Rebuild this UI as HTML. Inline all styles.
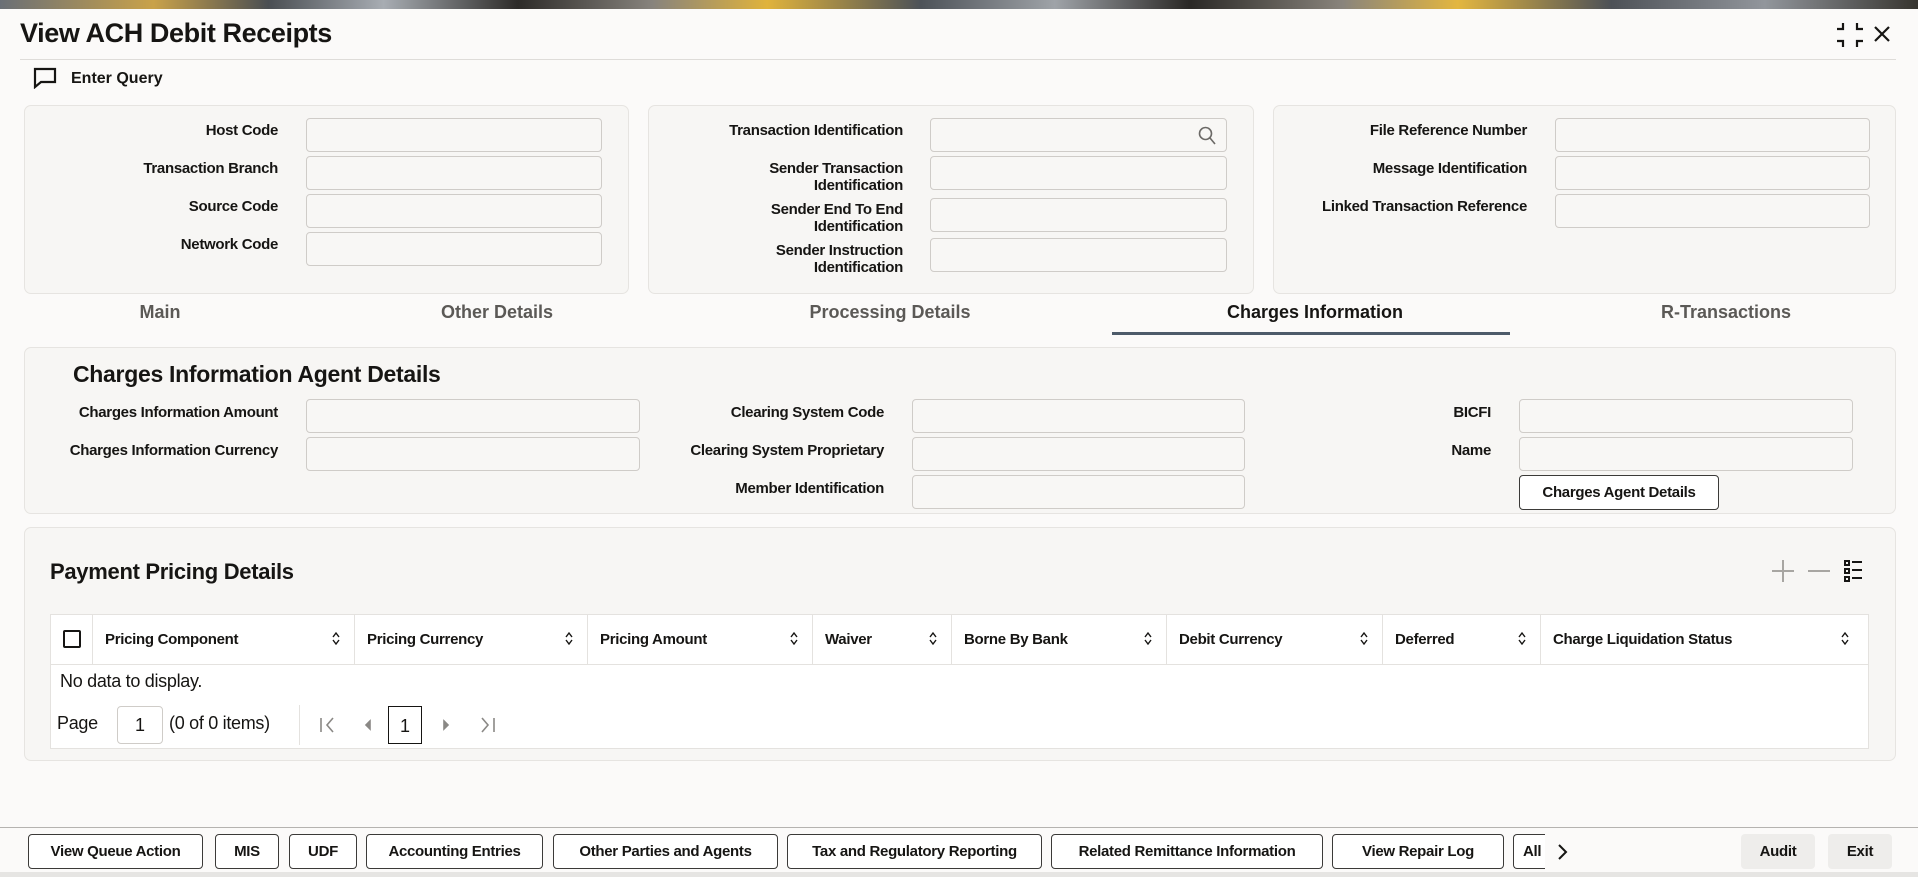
<!DOCTYPE html>
<html><head><meta charset="utf-8"><style>
*{box-sizing:border-box;margin:0;padding:0}
body{width:1918px;height:877px;position:relative;overflow:hidden;background:#fbfaf9;font-family:"Liberation Sans",Arial,sans-serif;color:#161513}
.a{position:absolute}
.banner{left:0;top:0;width:1918px;height:9px;background:linear-gradient(90deg,#6a6f76,#c9a24a 8%,#4a4e53 14%,#a8adb3 20%,#2d2b29 27%,#87837d 34%,#e0b33c 40%,#4d5258 48%,#9fa3a8 55%,#2a2826 62%,#89847c 70%,#e3b640 76%,#4d5157 84%,#92969c 92%,#36342f)}
.panel{background:#f7f6f4;border:1px solid #e6e4e1;border-radius:7px}
.lbl{font-size:15px;font-weight:bold;text-align:right;letter-spacing:-0.3px;line-height:17px}
.inp{background:#f8f7f5;border:1px solid #cfccc8;border-radius:4px;height:34px}
.tab{font-size:18px;font-weight:bold;color:#5b5956;transform:translateX(-50%);white-space:nowrap;top:302px}
.btn{top:834px;height:35px;border:1px solid #3b3a38;border-radius:4px;background:#fff;font-size:15px;font-weight:bold;display:flex;align-items:center;justify-content:center;letter-spacing:-0.3px;white-space:nowrap;overflow:hidden}
.th{top:614px;height:50px;font-size:15px;font-weight:bold;display:flex;align-items:center;padding-left:12px;letter-spacing:-0.3px;border-right:1px solid #e4e2df}
.sort{position:absolute;right:14px;top:17px;width:8px;height:14px}
</style></head><body>
<div class="a banner"></div>
<div class="a" style="left:20px;top:18px;font-size:27px;font-weight:bold;letter-spacing:-0.4px">View ACH Debit Receipts</div>
<svg class="a" style="left:1836px;top:22px" width="28" height="26" viewBox="0 0 28 26" fill="none" stroke="#161513" stroke-width="2.2"><path d="M7 1v6H1M21 1v6h6M7 25v-6H1M21 25v-6h6"/></svg>
<svg class="a" style="left:1873px;top:25px" width="18" height="18" viewBox="0 0 18 18" stroke="#161513" stroke-width="2.2"><path d="M2 2l14 14M16 2L2 16"/></svg>
<div class="a" style="left:20px;top:59px;width:1876px;height:1px;background:#dedcd9"></div>
<svg class="a" style="left:33px;top:67px" width="24" height="22" viewBox="0 0 24 22" fill="none" stroke="#161513" stroke-width="2.2"><path d="M2 2h20v13H8l-6 5z"/></svg>
<div class="a" style="left:71px;top:70px;font-size:16px;font-weight:bold">Enter Query</div>

<div class="a panel" style="left:24px;top:105px;width:605px;height:189px"></div>
<div class="a panel" style="left:648px;top:105px;width:606px;height:189px"></div>
<div class="a panel" style="left:1273px;top:105px;width:623px;height:189px"></div>

<div class="a lbl" style="left:60px;width:218px;top:122px">Host Code</div>
<div class="a lbl" style="left:60px;width:218px;top:160px">Transaction Branch</div>
<div class="a lbl" style="left:60px;width:218px;top:198px">Source Code</div>
<div class="a lbl" style="left:60px;width:218px;top:236px">Network Code</div>
<div class="a inp" style="left:306px;top:118px;width:296px"></div>
<div class="a inp" style="left:306px;top:156px;width:296px"></div>
<div class="a inp" style="left:306px;top:194px;width:296px"></div>
<div class="a inp" style="left:306px;top:232px;width:296px"></div>

<div class="a lbl" style="left:660px;width:243px;top:122px">Transaction Identification</div>
<div class="a lbl" style="left:660px;width:243px;top:160px">Sender Transaction<br>Identification</div>
<div class="a lbl" style="left:660px;width:243px;top:201px">Sender End To End<br>Identification</div>
<div class="a lbl" style="left:660px;width:243px;top:242px">Sender Instruction<br>Identification</div>
<div class="a inp" style="left:930px;top:118px;width:297px"></div>
<svg class="a" style="left:1198px;top:126px" width="18" height="19" viewBox="0 0 18 19" fill="none" stroke="#6b6966" stroke-width="1.6"><circle cx="7.5" cy="7.5" r="6"/><path d="M12 12l5 6"/></svg>
<div class="a inp" style="left:930px;top:156px;width:297px"></div>
<div class="a inp" style="left:930px;top:198px;width:297px"></div>
<div class="a inp" style="left:930px;top:238px;width:297px"></div>

<div class="a lbl" style="left:1280px;width:247px;top:122px">File Reference Number</div>
<div class="a lbl" style="left:1280px;width:247px;top:160px">Message Identification</div>
<div class="a lbl" style="left:1280px;width:247px;top:198px">Linked Transaction Reference</div>
<div class="a inp" style="left:1555px;top:118px;width:315px"></div>
<div class="a inp" style="left:1555px;top:156px;width:315px"></div>
<div class="a inp" style="left:1555px;top:194px;width:315px"></div>

<div class="a tab" style="left:160px">Main</div>
<div class="a tab" style="left:497px">Other Details</div>
<div class="a tab" style="left:890px">Processing Details</div>
<div class="a tab" style="left:1315px;color:#161513">Charges Information</div>
<div class="a tab" style="left:1726px">R-Transactions</div>
<div class="a" style="left:1112px;top:332px;width:398px;height:3px;background:#4d5b6a"></div>

<div class="a panel" style="left:24px;top:347px;width:1872px;height:167px"></div>
<div class="a" style="left:73px;top:361px;font-size:23px;font-weight:bold;letter-spacing:-0.3px">Charges Information Agent Details</div>
<div class="a lbl" style="left:40px;width:238px;top:404px">Charges Information Amount</div>
<div class="a lbl" style="left:40px;width:238px;top:442px">Charges Information Currency</div>
<div class="a inp" style="left:306px;top:399px;width:334px"></div>
<div class="a inp" style="left:306px;top:437px;width:334px"></div>
<div class="a lbl" style="left:640px;width:244px;top:404px">Clearing System Code</div>
<div class="a lbl" style="left:640px;width:244px;top:442px">Clearing System Proprietary</div>
<div class="a lbl" style="left:640px;width:244px;top:480px">Member Identification</div>
<div class="a inp" style="left:912px;top:399px;width:333px"></div>
<div class="a inp" style="left:912px;top:437px;width:333px"></div>
<div class="a inp" style="left:912px;top:475px;width:333px"></div>
<div class="a lbl" style="left:1300px;width:191px;top:404px">BICFI</div>
<div class="a lbl" style="left:1300px;width:191px;top:442px">Name</div>
<div class="a inp" style="left:1519px;top:399px;width:334px"></div>
<div class="a inp" style="left:1519px;top:437px;width:334px"></div>
<div class="a btn" style="left:1519px;top:475px;width:200px;height:35px">Charges Agent Details</div>

<div class="a panel" style="left:24px;top:527px;width:1872px;height:234px"></div>
<div class="a" style="left:50px;top:559px;font-size:22px;font-weight:bold;letter-spacing:-0.3px">Payment Pricing Details</div>
<svg class="a" style="left:1770px;top:558px" width="110" height="28" viewBox="0 0 110 28" fill="none"><path d="M13 2v22M2 13h22" stroke="#a8a6a2" stroke-width="2"/><path d="M38 13h22" stroke="#a8a6a2" stroke-width="2"/><g stroke="#161513" stroke-width="2"><rect x="75" y="3" width="4" height="4"/><rect x="75" y="11" width="4" height="4"/><rect x="75" y="19" width="4" height="4"/><path d="M82 4h10M82 12h10M82 20h10"/></g></svg>

<div class="a" style="left:50px;top:614px;width:1819px;height:135px;background:#fff;border:1px solid #e4e2df"></div>
<div class="a" style="left:50px;top:664px;width:1819px;height:1px;background:#e4e2df"></div>
<div class="a" style="left:50px;top:614px;width:43px;height:50px;border-right:1px solid #e4e2df"></div>
<div class="a" style="left:63px;top:630px;width:18px;height:18px;border:2px solid #161513;border-radius:2px"></div>
<svg width="0" height="0" style="position:absolute"><defs><path id="s" d="M1 6l3-4 3 4M1 9l3 4 3-4" stroke="#161513" stroke-width="1.4" fill="none"/></defs></svg>
<div class="a th" style="left:93px;width:262px">Pricing Component<svg class="sort" viewBox="0 0 8 14"><use href="#s"/></svg></div>
<div class="a th" style="left:355px;width:233px">Pricing Currency<svg class="sort" viewBox="0 0 8 14"><use href="#s"/></svg></div>
<div class="a th" style="left:588px;width:225px">Pricing Amount<svg class="sort" viewBox="0 0 8 14"><use href="#s"/></svg></div>
<div class="a th" style="left:813px;width:139px">Waiver<svg class="sort" viewBox="0 0 8 14"><use href="#s"/></svg></div>
<div class="a th" style="left:952px;width:215px">Borne By Bank<svg class="sort" viewBox="0 0 8 14"><use href="#s"/></svg></div>
<div class="a th" style="left:1167px;width:216px">Debit Currency<svg class="sort" viewBox="0 0 8 14"><use href="#s"/></svg></div>
<div class="a th" style="left:1383px;width:158px">Deferred<svg class="sort" viewBox="0 0 8 14"><use href="#s"/></svg></div>
<div class="a th" style="left:1541px;width:328px;border-right:none">Charge Liquidation Status<svg class="sort" style="right:20px" viewBox="0 0 8 14"><use href="#s"/></svg></div>
<div class="a" style="left:60px;top:671px;font-size:18px;letter-spacing:-0.3px">No data to display.</div>
<div class="a" style="left:57px;top:713px;font-size:18px;letter-spacing:-0.3px">Page</div>
<div class="a" style="left:117px;top:706px;width:46px;height:38px;border:1px solid #cfccc8;border-radius:4px;background:#fff;font-size:18px;text-align:center;line-height:36px">1</div>
<div class="a" style="left:169px;top:713px;font-size:18px;letter-spacing:-0.3px">(0 of 0 items)</div>
<div class="a" style="left:299px;top:705px;width:1px;height:40px;background:#e4e2df"></div>
<svg class="a" style="left:318px;top:714px" width="190" height="22" viewBox="0 0 190 22" fill="none" stroke="#8a8885" stroke-width="1.6"><path d="M3 4v14M15 4l-6 7 6 7"/><path d="M52 7l-4 4 4 4z" fill="#8a8885"/><path d="M126 7l4 4-4 4z" fill="#8a8885"/><path d="M164 4l6 7-6 7M176 4v14"/></svg>
<div class="a" style="left:388px;top:706px;width:34px;height:38px;border:1.5px solid #161513;font-size:18px;text-align:center;line-height:38px">1</div>

<div class="a" style="left:0;top:827px;width:1918px;height:1px;background:#b5b3b0"></div>
<div class="a" style="left:0;top:872px;width:1918px;height:5px;background:#e6e5e3"></div>
<div class="a btn" style="left:28px;width:175px">View Queue Action</div>
<div class="a btn" style="left:215px;width:64px">MIS</div>
<div class="a btn" style="left:289px;width:68px">UDF</div>
<div class="a btn" style="left:366px;width:177px">Accounting Entries</div>
<div class="a btn" style="left:553px;width:225px">Other Parties and Agents</div>
<div class="a btn" style="left:787px;width:255px">Tax and Regulatory Reporting</div>
<div class="a btn" style="left:1051px;width:272px">Related Remittance Information</div>
<div class="a btn" style="left:1332px;width:172px">View Repair Log</div>
<div class="a btn" style="left:1513px;width:32px;border-right:none;justify-content:flex-start;padding-left:9px;border-radius:4px 0 0 4px">All</div>
<svg class="a" style="left:1556px;top:843px" width="12" height="18" viewBox="0 0 12 18" fill="none" stroke="#161513" stroke-width="2"><path d="M3 2l7 7-7 7"/></svg>
<div class="a btn" style="left:1741px;width:74px;border:none;background:#eeedeb">Audit</div>
<div class="a btn" style="left:1828px;width:64px;border:none;background:#eeedeb">Exit</div>
</body></html>
